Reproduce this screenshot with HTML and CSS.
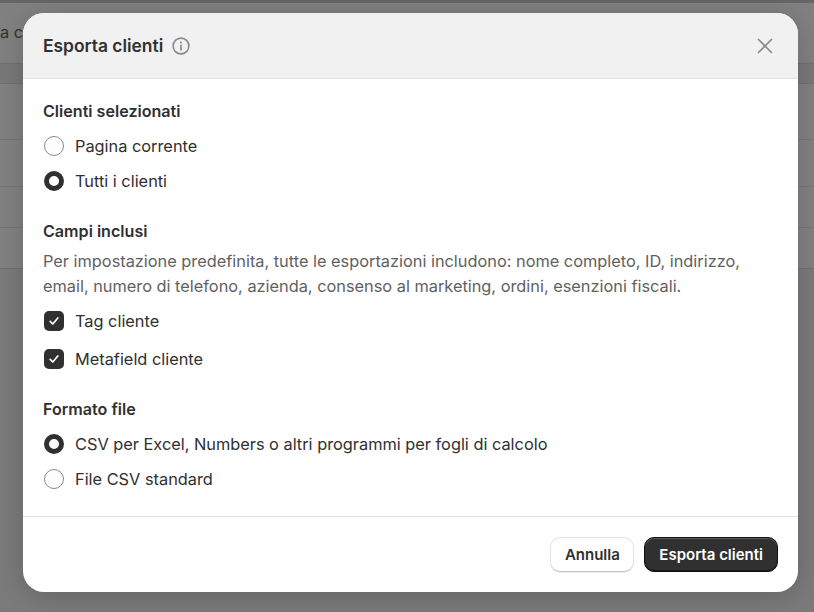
FILE: index.html
```html
<!DOCTYPE html>
<html lang="it">
<head>
    <meta charset="UTF-8">
    <title>Esporta clienti</title>
    <link rel="stylesheet" href="styles.css">
</head>
<body>
    <div class="page">
        <div class="top-bar"></div>
        <div class="bg-top"><div class="bg-title">a c</div></div>
        <div class="bg-head"></div>
        <div class="bg-row r1"></div>
        <div class="bg-row r2"></div>
        <div class="bg-row r3"></div>
        <div class="bg-row r4"></div>
    </div>

    <div class="modal">
        <div class="modal-head">
            <h2>Esporta clienti</h2>
            <svg class="info" width="20" height="20" viewBox="0 0 20 20" fill="none" stroke="#8a8a8a">
                <circle cx="10" cy="10" r="7.9" stroke-width="1.6"/>
                <path d="M10 9.4v4.4" stroke-width="1.7" stroke-linecap="round"/>
                <circle cx="10" cy="6.5" r="1.05" fill="#8a8a8a" stroke="none"/>
            </svg>
            <svg class="close" width="20" height="20" viewBox="0 0 20 20" fill="none" stroke="#8a8a8a" stroke-width="1.7" stroke-linecap="round">
                <path d="M3.5 3.5l13 13M16.5 3.5l-13 13"/>
            </svg>
        </div>

        <div class="modal-body">
            <div class="group">
                <h3>Clienti selezionati</h3>
                <div class="option"><span class="radio"></span>Pagina corrente</div>
                <div class="option"><span class="radio on"></span>Tutti i clienti</div>
            </div>

            <div class="group fields">
                <h3>Campi inclusi</h3>
                <p class="note">Per impostazione predefinita, tutte le esportazioni includono: nome completo, ID, indirizzo, email, numero di telefono, azienda, consenso al marketing, ordini, esenzioni fiscali.</p>
                <div class="check-row">
                    <span class="check"><svg width="12" height="12" viewBox="0 0 12 12" fill="none" stroke="#fff" stroke-width="1.7" stroke-linecap="round" stroke-linejoin="round"><path d="M2.2 6.4l2.6 2.6 5-6"/></svg></span>
                    Tag cliente
                </div>
                <div class="check-row">
                    <span class="check"><svg width="12" height="12" viewBox="0 0 12 12" fill="none" stroke="#fff" stroke-width="1.7" stroke-linecap="round" stroke-linejoin="round"><path d="M2.2 6.4l2.6 2.6 5-6"/></svg></span>
                    Metafield cliente
                </div>
            </div>

            <div class="group">
                <h3>Formato file</h3>
                <div class="option"><span class="radio on"></span>CSV per Excel, Numbers o altri programmi per fogli di calcolo</div>
                <div class="option"><span class="radio"></span>File CSV standard</div>
            </div>
        </div>

        <div class="modal-foot">
            <button class="btn">Annulla</button>
            <button class="btn primary">Esporta clienti</button>
        </div>
    </div>
</body>
</html>
```

FILE: styles.css
```css
* {
    box-sizing: border-box;
}

html, body {
    height: 100%;
}

body {
    margin: 0;
    font-family: Inter, "Liberation Sans", sans-serif;
    font-size: 16.33px;
    color: #303030;
    background: #7a7a7a;
    overflow: hidden;
}

.page {
    height: 269px;
    background: #808080;
    border-bottom: 1px solid #6e6e6e;
}

.top-bar {
    height: 3px;
    background: #666;
}

.bg-top {
    height: 61px;
    padding-top: 19px;
    border-bottom: 1px solid #6f6f6f;
}

.bg-title {
    color: #333;
    white-space: nowrap;
}

.bg-head {
    height: 20px;
    background: #787878;
    border-bottom: 1px solid #6f6f6f;
}

.bg-row {
    border-bottom: 1px solid #747474;
}

.r1 { height: 56px; }
.r2 { height: 47px; }
.r3 { height: 41px; }
.r4 { height: 40px; border-bottom: none; }

.modal {
    position: absolute;
    left: 23px;
    top: 13px;
    width: 775px;
    height: 579px;
    background: #fff;
    border-radius: 21px;
    overflow: hidden;
    display: flex;
    flex-direction: column;
    box-shadow: 0 4px 24px rgba(0,0,0,0.18);
}

.modal-head {
    flex-shrink: 0;
    height: 66px;
    padding: 0 23px 0 20px;
    background: #f1f1f1;
    border-bottom: 1px solid #e3e3e3;
    display: flex;
    align-items: center;
}

.modal-head h2 {
    margin: 0;
    font-size: 17.4px;
    font-weight: 600;
}

.info {
    margin-left: 8px;
}

.close {
    margin-left: auto;
}

.modal-body {
    flex: 1;
    padding: 20px 20px 0;
}

.group {
    margin-bottom: 21px;
}

.group.fields {
    margin-bottom: 19px;
}

.group:last-child {
    margin-bottom: 0;
}

h3 {
    margin: 0 0 5px;
    font-size: 16.1px;
    line-height: 24px;
    font-weight: 600;
}

.option {
    height: 35px;
    display: flex;
    align-items: center;
    gap: 11px;
}

.radio {
    width: 20px;
    height: 20px;
    margin-left: 1px;
    border-radius: 50%;
    border: 1px solid #8a8a8a;
    background: #fdfdfd;
}

.radio.on {
    border: 5.5px solid #303030;
    background: #fff;
}

.note {
    margin: 6px 0 3px;
    line-height: 25px;
    color: #616161;
}

.check-row {
    height: 38px;
    display: flex;
    align-items: center;
    gap: 11px;
}

.check {
    width: 20px;
    height: 20px;
    margin-left: 1px;
    border-radius: 5px;
    background: #303030;
    display: flex;
    align-items: center;
    justify-content: center;
}

.modal-foot {
    flex-shrink: 0;
    height: 76px;
    padding: 0 20px 0 0;
    border-top: 1px solid #e3e3e3;
    display: flex;
    align-items: center;
    justify-content: flex-end;
    gap: 10px;
}

.btn {
    height: 35px;
    padding: 0 13.5px;
    font: 600 15px Inter, "Liberation Sans", sans-serif;
    color: #303030;
    background: #fff;
    border: 1px solid #e3e3e3;
    border-bottom-color: #c4c4c4;
    border-radius: 10px;
    box-shadow: 0 1px 1px rgba(0,0,0,0.08);
}

.btn.primary {
    padding: 0 14px;
    color: #fff;
    background: #303030;
    border: 1px solid #111;
    box-shadow: inset 0 1px 0 #5a5a5a, inset 0 -1px 0 #1a1a1a;
}
```
